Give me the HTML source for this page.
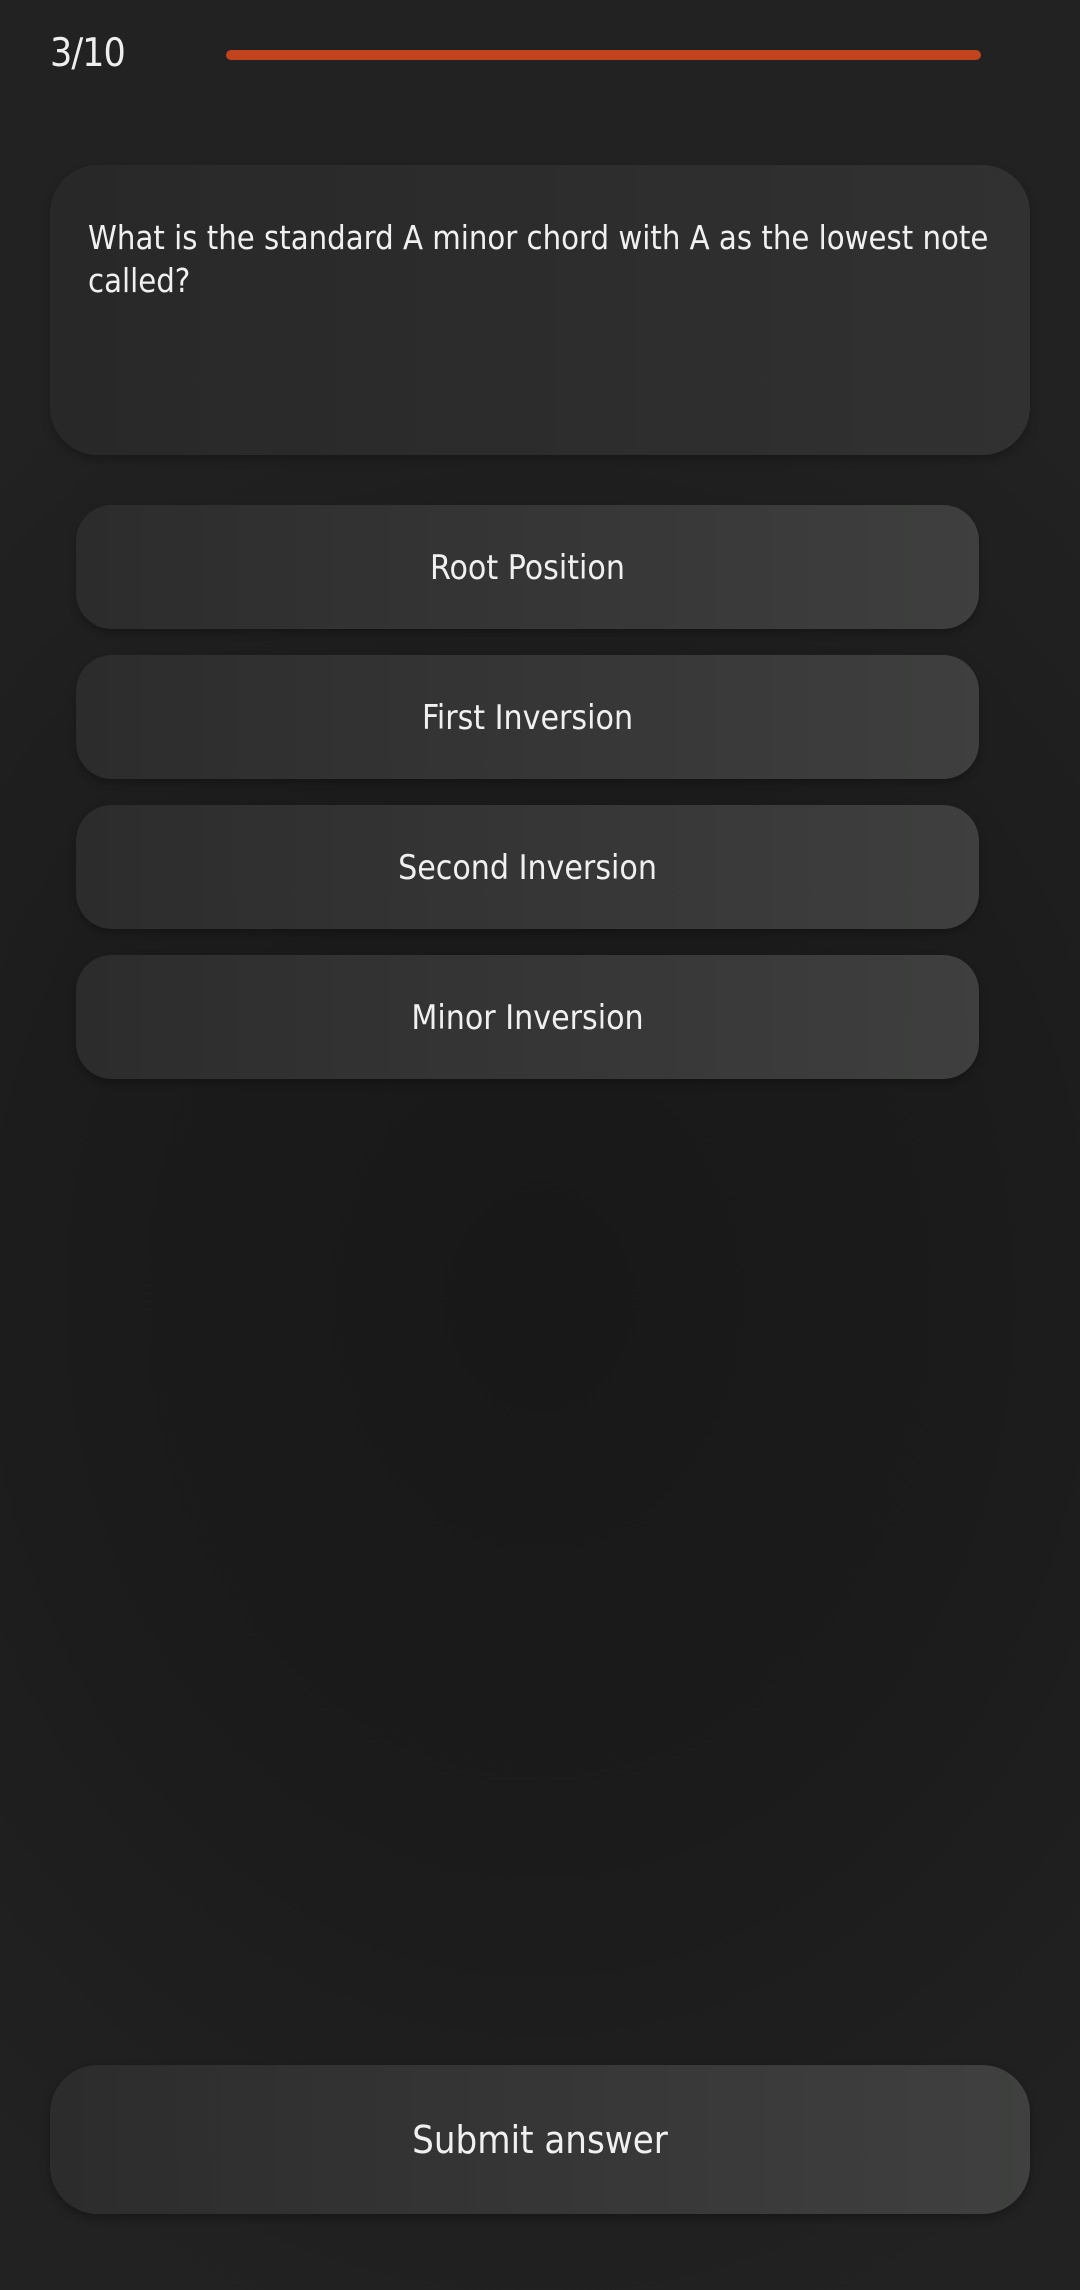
<!DOCTYPE html>
<html><head><meta charset="utf-8"><style>
html,body{margin:0;padding:0}
body{width:1080px;height:2290px;position:relative;overflow:hidden;
background:radial-gradient(ellipse 900px 1100px at 540px 1300px,#181818 0%,#1b1b1b 50%,#222 100%);
font-family:"Liberation Sans Narrow","DejaVu Sans Condensed","Liberation Sans",sans-serif;color:#f0f0f0}
.abs{position:absolute}
#cnt{left:50px;top:31px;font-size:39px;font-family:"DejaVu Sans Condensed","Liberation Sans",sans-serif;font-weight:300;color:#eee;letter-spacing:-1px}
#bar{left:226px;top:50px;width:755px;height:10px;border-radius:5px;background:#c1441f}
#q{left:50px;top:165px;width:980px;height:290px;border-radius:48px;background:linear-gradient(90deg,#282828,#313131);box-shadow:0 4px 10px rgba(0,0,0,.25)}
#q p{margin:0;position:absolute;left:38px;top:52px;right:20px;font-size:32.5px;line-height:43px}
.opt{left:76px;width:903px;height:124px;border-radius:36px;background:linear-gradient(90deg,#2c2c2c,#3e3f3e);display:flex;align-items:center;justify-content:center;font-size:33.5px;box-shadow:0 4px 8px rgba(0,0,0,.25)}
#sub{left:50px;top:2065px;width:980px;height:149px;border-radius:48px;background:linear-gradient(90deg,#2c2c2c,#3f403f);display:flex;align-items:center;justify-content:center;font-size:38px;box-shadow:0 4px 10px rgba(0,0,0,.3)}
</style></head><body>
<div class="abs" id="cnt">3/10</div>
<div class="abs" id="bar"></div>
<div class="abs" id="q"><p>What is the standard A minor chord with A as the lowest note called?</p></div>
<div class="abs opt" style="top:505px">Root Position</div>
<div class="abs opt" style="top:655px">First Inversion</div>
<div class="abs opt" style="top:805px">Second Inversion</div>
<div class="abs opt" style="top:955px">Minor Inversion</div>
<div class="abs" id="sub">Submit answer</div>
</body></html>
